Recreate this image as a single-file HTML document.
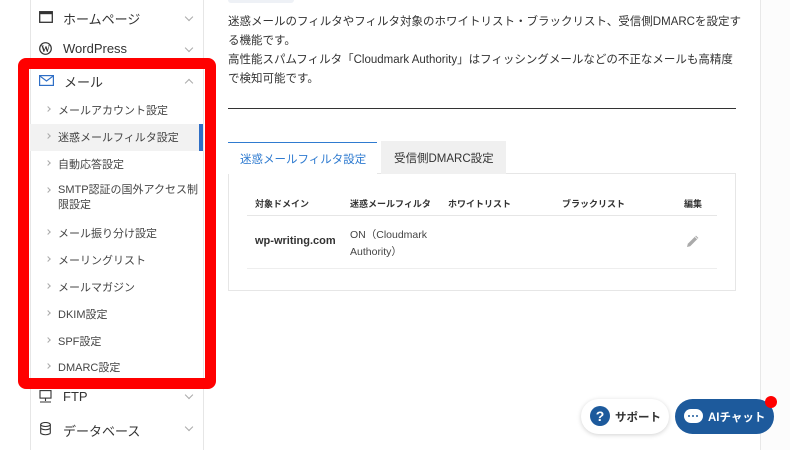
<!DOCTYPE html>
<html><head><meta charset="utf-8"><style>
*{margin:0;padding:0;box-sizing:border-box}
body{width:790px;height:450px;overflow:hidden;background:#fff;font-family:"Liberation Sans","Noto Sans CJK JP",sans-serif;color:#333;position:relative}
.a{position:absolute;white-space:nowrap}
.side{position:absolute;left:30px;top:0;width:174px;height:450px;border-left:1px solid #e6e6e6;border-right:1px solid #e6e6e6;background:#fff}
.top{font-size:13px;color:#333}
.sub{font-size:11px;color:#444}
.chev{position:absolute;width:6px;height:6px;border-right:1px solid #aaa;border-bottom:1px solid #aaa}
.sc{position:absolute;width:4px;height:4px;border-right:1px solid #aaa;border-top:1px solid #aaa;transform:rotate(45deg)}
</style></head><body>
<div class="side"></div>
<div class="a" style="left:30px;top:124px;width:173px;height:27px;background:#f2f2f2"></div>
<div class="a" style="left:199px;top:124px;width:4px;height:27px;background:#2f6fc6"></div>
<div class="a" style="left:18px;top:58px;width:198px;height:331px;border:11px solid #ff0000;border-radius:8px"></div>

<svg class="a" style="left:39px;top:11px" width="14" height="12"><rect x="0.7" y="0.7" width="12.6" height="10.6" fill="none" stroke="#333" stroke-width="1.3"/><rect x="0.7" y="0.7" width="12.6" height="2.5" fill="#333"/></svg>
<div class="a top" style="left:63px;top:9px">ホームページ</div>
<div class="chev" style="left:186px;top:14px;transform:rotate(45deg)"></div>
<svg class="a" style="left:39px;top:42px" width="13" height="13"><circle cx="6.5" cy="6.5" r="5.8" fill="none" stroke="#333" stroke-width="1.2"/><text x="6.5" y="10" font-size="9" text-anchor="middle" font-family="Liberation Serif" font-weight="bold" fill="#333">W</text></svg>
<div class="a top" style="left:63px;top:41px">WordPress</div>
<div class="chev" style="left:186px;top:45px;transform:rotate(45deg)"></div>
<svg class="a" style="left:39px;top:75px" width="15" height="11"><rect x="0.6" y="0.6" width="13.8" height="9.8" fill="none" stroke="#2f6fc6" stroke-width="1.2"/><path d="M0.6 0.8 L7.5 6 L14.4 0.8" fill="none" stroke="#2f6fc6" stroke-width="1.2"/></svg>
<div class="a top" style="left:64px;top:72px">メール</div>
<div class="chev" style="left:186px;top:80px;transform:rotate(225deg)"></div>

<div class="sc" style="left:46px;top:107px"></div><div class="a sub" style="left:58px;top:102px">メールアカウント設定</div>
<div class="sc" style="left:46px;top:134px"></div><div class="a sub" style="left:58px;top:129px">迷惑メールフィルタ設定</div>
<div class="sc" style="left:46px;top:161px"></div><div class="a sub" style="left:58px;top:156px">自動応答設定</div>
<div class="sc" style="left:46px;top:188px"></div><div class="a sub" style="left:58px;top:183px;line-height:15px">SMTP認証の国外アクセス制<br>限設定</div>
<div class="sc" style="left:46px;top:230px"></div><div class="a sub" style="left:58px;top:225px">メール振り分け設定</div>
<div class="sc" style="left:46px;top:257px"></div><div class="a sub" style="left:58px;top:252px">メーリングリスト</div>
<div class="sc" style="left:46px;top:284px"></div><div class="a sub" style="left:58px;top:279px">メールマガジン</div>
<div class="sc" style="left:46px;top:311px"></div><div class="a sub" style="left:58px;top:306px">DKIM設定</div>
<div class="sc" style="left:46px;top:338px"></div><div class="a sub" style="left:58px;top:333px">SPF設定</div>
<div class="sc" style="left:46px;top:364px"></div><div class="a sub" style="left:58px;top:359px">DMARC設定</div>

<svg class="a" style="left:39px;top:390px" width="13" height="13"><rect x="1" y="0.6" width="11" height="7.5" fill="none" stroke="#333" stroke-width="1.1"/><path d="M6.5 8 V11 M1 12 H12" stroke="#333" stroke-width="1.1"/></svg>
<div class="a top" style="left:63px;top:389px">FTP</div>
<div class="chev" style="left:186px;top:392px;transform:rotate(45deg)"></div>
<svg class="a" style="left:40px;top:422px" width="11" height="14"><ellipse cx="5.5" cy="2.5" rx="4.8" ry="2" fill="none" stroke="#333" stroke-width="1.1"/><path d="M0.7 2.5 V11.5 M10.3 2.5 V11.5 M0.7 6.5 Q5.5 9 10.3 6.5 M0.7 11.5 Q5.5 14 10.3 11.5" fill="none" stroke="#333" stroke-width="1.1"/></svg>
<div class="a top" style="left:63px;top:421px">データベース</div>
<div class="chev" style="left:186px;top:424px;transform:rotate(45deg)"></div>

<div class="a" style="left:760px;top:0;width:1px;height:450px;background:#e8e8e8"></div>
<div class="a" style="left:761px;top:0;width:29px;height:450px;background:#fcfcfc"></div>
<div class="a" style="left:228px;top:0;width:66px;height:3px;background:#eef1f6;border-radius:0 0 3px 3px"></div>
<div class="a" style="left:228px;top:13px;font-size:11.5px;line-height:19px;color:#333;white-space:normal;width:520px">迷惑メールのフィルタやフィルタ対象のホワイトリスト・ブラックリスト、受信側DMARCを設定す<br>る機能です。<br>高性能スパムフィルタ「Cloudmark Authority」はフィッシングメールなどの不正なメールも高精度<br>で検知可能です。</div>
<div class="a" style="left:228px;top:108px;width:508px;height:1px;background:#333"></div>

<div class="a" style="left:228px;top:173px;width:508px;height:118px;border:1px solid #e6e6e6;border-top:none"></div>
<div class="a" style="left:375px;top:173px;width:361px;height:1px;background:#e6e6e6"></div>
<div class="a" style="left:228px;top:142px;width:149px;height:32px;background:#fff;border-top:1px solid #2f7bd0;color:#2f7bd0;font-size:11.5px;padding:8px 0 0 12px">迷惑メールフィルタ設定</div>
<div class="a" style="left:381px;top:141px;width:125px;height:33px;background:#f0f0f0;font-size:11.5px;color:#333;padding:9px 0 0 13px">受信側DMARC設定</div>

<div class="a" style="font-size:9px;color:#333;top:197px;left:255px;font-weight:bold">対象ドメイン</div>
<div class="a" style="font-size:9px;color:#333;top:197px;left:350px;font-weight:bold">迷惑メールフィルタ</div>
<div class="a" style="font-size:9px;color:#333;top:197px;left:448px;font-weight:bold">ホワイトリスト</div>
<div class="a" style="font-size:9px;color:#333;top:197px;left:562px;font-weight:bold">ブラックリスト</div>
<div class="a" style="font-size:9px;color:#333;top:197px;left:684px;font-weight:bold">編集</div>
<div class="a" style="left:247px;top:215px;width:470px;height:1px;background:#e6e6e6"></div>
<div class="a" style="font-size:11px;color:#333;top:235px;left:255px;font-weight:bold">wp-writing.com</div>
<div class="a" style="font-size:10.5px;color:#444;top:227px;left:350px;line-height:17px">ON（Cloudmark<br>Authority）</div>
<svg class="a" style="left:686px;top:234px" width="14" height="14"><path d="M1 13 L1.8 9.8 L10 1.6 L12.4 4 L4.2 12.2 Z" fill="#aaa"/><path d="M9 2.6 L11.4 5" stroke="#fff" stroke-width="0.8"/></svg>
<div class="a" style="left:247px;top:268px;width:470px;height:1px;background:#eee"></div>

<div class="a" style="left:581px;top:399px;width:88px;height:35px;border-radius:18px;background:#fff;box-shadow:0 1px 5px rgba(0,0,0,.18)"></div>
<div class="a" style="left:590px;top:406px;width:20px;height:20px;border-radius:50%;background:#1d5a9c;color:#fff;font-weight:bold;font-size:14px;text-align:center;line-height:20px">?</div>
<div class="a" style="left:615px;top:409px;font-size:11.5px;font-weight:bold;color:#333">サポート</div>
<div class="a" style="left:675px;top:399px;width:99px;height:35px;border-radius:18px;background:#1d5a9c"></div>
<div class="a" style="left:684px;top:409px;width:19px;height:14px;border-radius:7px;background:#fff"></div>
<div class="a" style="left:688px;top:415px;width:2px;height:2px;background:#1d5a9c;border-radius:50%;box-shadow:4px 0 #1d5a9c,8px 0 #1d5a9c"></div>
<div class="a" style="left:708px;top:409px;font-size:11.5px;font-weight:bold;color:#fff">AIチャット</div>
<div class="a" style="left:765px;top:396px;width:12px;height:12px;border-radius:50%;background:#f00"></div>
</body></html>
